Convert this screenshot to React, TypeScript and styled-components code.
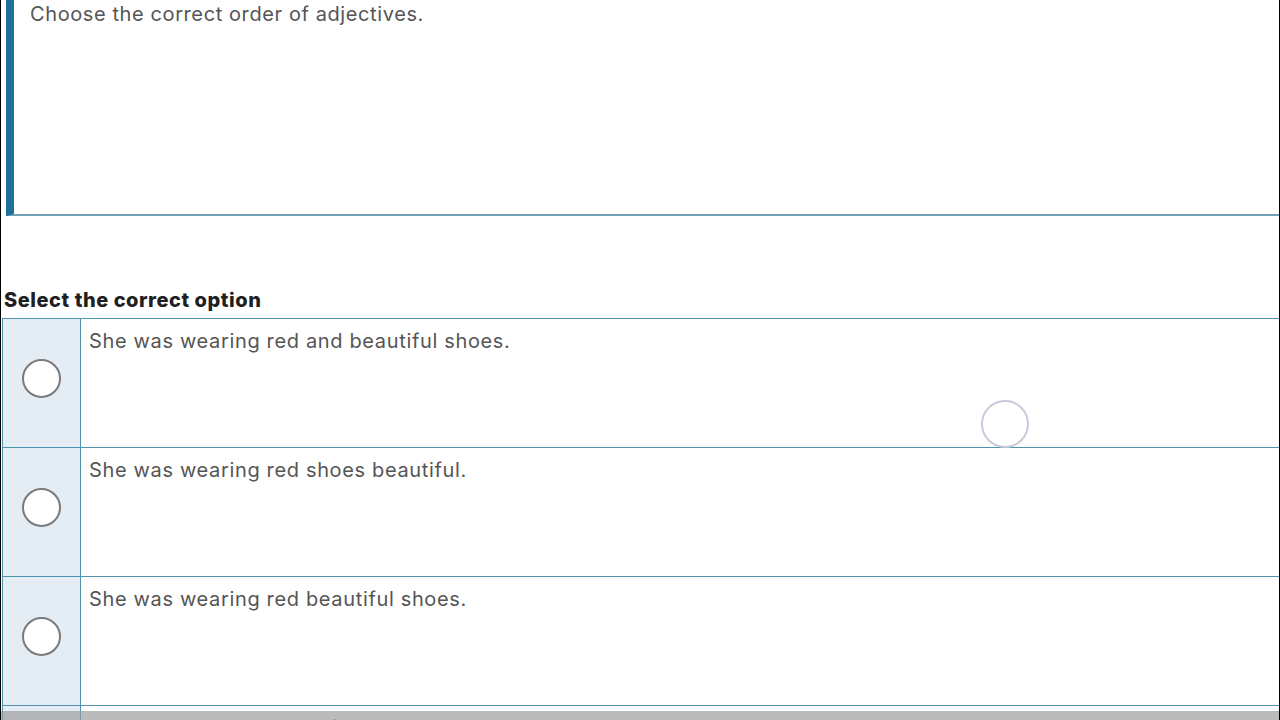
import styled, { createGlobalStyle } from "styled-components";

const GlobalStyle = createGlobalStyle`
  html, body {
    margin: 0;
    padding: 0;
    background: #ffffff;
    overflow: hidden;
  }
  body {
    font-family: Inter, "Open Sans", Arial, sans-serif;
  }
`;

const colors = {
  line: "#4f93ad",
  cardLine: "#6ea2b4",
  accent: "#20709a",
  side: "#e4ecf4",
  text: "#555555",
  heading: "#1f1f1f",
};

const Page = styled.div`
  width: 1278px;
  height: 720px;
  border-left: 1px solid #000;
  border-right: 1px solid #000;
  display: flex;
  flex-direction: column;
  position: relative;
  overflow: hidden;
  & > * {
    flex-shrink: 0;
  }
`;

const QuestionCard = styled.div`
  margin-left: 5px;
  height: 214px;
  border-left: 8px solid ${colors.accent};
  border-bottom: 2px solid ${colors.cardLine};
  padding: 0 16px;
`;

const QuestionText = styled.p`
  margin: 0;
  font-size: 20px;
  line-height: 28px;
  letter-spacing: 0.6px;
  color: ${colors.text};
`;

const Heading = styled.h2`
  margin: 70px 0 0 3px;
  font-size: 20px;
  line-height: 28px;
  font-weight: 800;
  letter-spacing: 0.55px;
  color: ${colors.heading};
`;

const OptionList = styled.div`
  margin: 4px 0 0 1px;
  border-top: 1px solid ${colors.line};
  border-left: 1px solid ${colors.line};
`;

const OptionRow = styled.div`
  display: grid;
  grid-template-columns: 78px 1fr;
  height: 128px;
  border-bottom: 1px solid ${colors.line};
`;

const RadioCell = styled.div`
  background: ${colors.side};
  border-right: 1px solid ${colors.line};
  display: flex;
  align-items: center;
  justify-content: center;
  padding-bottom: 9px;
`;

const Radio = styled.span`
  width: 35px;
  height: 35px;
  border-radius: 50%;
  border: 2px solid #7a7a7a;
  background: #ffffff;
`;

const OptionText = styled.div`
  padding: 8px 8px;
  font-size: 20px;
  line-height: 28px;
  letter-spacing: 0.65px;
  color: ${colors.text};
`;

const TouchRing = styled.div`
  position: absolute;
  left: 980px;
  top: 400px;
  width: 44px;
  height: 44px;
  border-radius: 50%;
  border: 2px solid #c9c9dc;
  filter: blur(0.6px);
`;

const BottomShade = styled.div`
  position: absolute;
  left: 0;
  right: 0;
  bottom: 0;
  height: 9px;
  background: rgba(150, 150, 150, 0.65);
`;

const options = [
  "She was wearing red and beautiful shoes.",
  "She was wearing red shoes beautiful.",
  "She was wearing red beautiful shoes.",
  "She was wearing beautiful red shoes.",
];

export default function App() {
  return (
    <>
      <GlobalStyle />
      <Page>
        <QuestionCard>
          <QuestionText>Choose the correct order of adjectives.</QuestionText>
        </QuestionCard>
        <Heading>Select the correct option</Heading>
        <OptionList>
          {options.map((o) => (
            <OptionRow key={o}>
              <RadioCell>
                <Radio />
              </RadioCell>
              <OptionText>{o}</OptionText>
            </OptionRow>
          ))}
        </OptionList>
        <TouchRing />
        <BottomShade />
      </Page>
    </>
  );
}
